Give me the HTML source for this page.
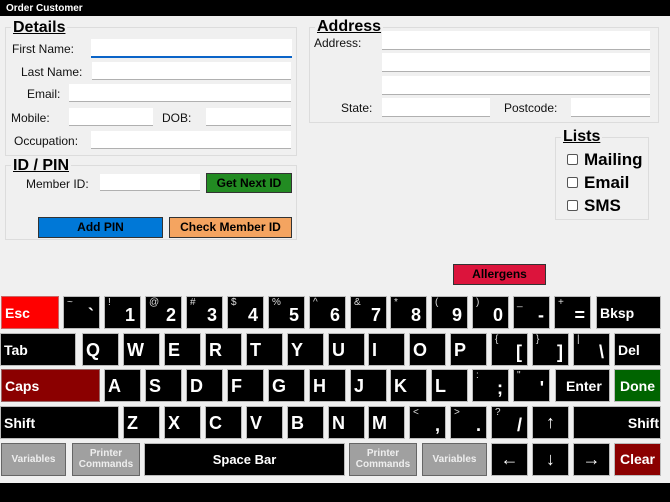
<!DOCTYPE html>
<html><head><meta charset="utf-8"><style>
*{margin:0;padding:0;box-sizing:border-box}
body{width:670px;height:502px;background:#000;position:relative;overflow:hidden;font-family:"Liberation Sans",Arial,sans-serif}
#main{position:absolute;left:0;top:16px;width:670px;height:467px;background:#f0f0f0}
.t{position:absolute;left:6px;top:3px;color:#fff;font-size:10px;font-weight:bold}
.g{position:absolute;border:1px solid #dcdcdc}
.lg{position:absolute;background:#f0f0f0;font-size:16px;font-weight:bold;text-decoration:underline;padding:0 2px;line-height:15px}
.l{position:absolute;font-size:12px;color:#111;line-height:14px}
.i{position:absolute;background:#fff;border-bottom:1px solid #b0b0b0}
.b{position:absolute;font-size:12px;font-weight:bold;text-align:center;border:1px solid #333}
.k{position:absolute;background:#000;border:1px solid #bbb;color:#fff;font-weight:bold;font-size:18px}
.k .c{position:absolute;left:3px;top:6px}
.k .s{position:absolute;left:3px;top:0;font-size:10px;font-weight:normal;color:#ddd}
.k .n{position:absolute;right:5px;bottom:2px;font-size:18px}
.k .w{position:absolute;left:3px;top:8px;font-size:14px}
.gr{background:#a0a0a0;color:#eee;font-size:10px;text-align:center;border:1px solid #666;line-height:11px}
.cb{position:absolute;width:11px;height:11px;border:1px solid #555;border-radius:2px;background:#fff}
.ck{position:absolute;font-size:17px;font-weight:bold}
</style></head><body>
<div class="t">Order Customer</div>
<div id="main">
<div class="g" style="left:5px;top:11px;width:292px;height:129px"></div>
<div class="lg" style="left:11px;top:4px">Details</div>
<div class="l" style="left:12px;top:26px">First Name:</div>
<div class="i" style="left:91px;top:23px;width:201px;height:19px;border-bottom:2px solid #0a64c8"></div>
<div class="l" style="left:21px;top:49px">Last Name:</div>
<div class="i" style="left:92px;top:46px;width:199px;height:18px"></div>
<div class="l" style="left:27px;top:71px">Email:</div>
<div class="i" style="left:69px;top:68px;width:222px;height:18px"></div>
<div class="l" style="left:11px;top:95px">Mobile:</div>
<div class="i" style="left:69px;top:92px;width:84px;height:18px"></div>
<div class="l" style="left:162px;top:95px">DOB:</div>
<div class="i" style="left:206px;top:92px;width:85px;height:18px"></div>
<div class="l" style="left:14px;top:118px">Occupation:</div>
<div class="i" style="left:91px;top:115px;width:200px;height:18px"></div>

<div class="g" style="left:5px;top:149px;width:292px;height:75px"></div>
<div class="lg" style="left:11px;top:142px">ID / PIN</div>
<div class="l" style="left:26px;top:161px">Member ID:</div>
<div class="i" style="left:100px;top:158px;width:100px;height:17px"></div>
<div class="b" style="left:206px;top:157px;width:86px;height:20px;background:#228b22;line-height:18px">Get Next ID</div>
<div class="b" style="left:38px;top:201px;width:125px;height:21px;background:#0078d7;line-height:19px">Add PIN</div>
<div class="b" style="left:169px;top:201px;width:123px;height:21px;background:#f4a460;line-height:19px">Check Member ID</div>

<div class="g" style="left:309px;top:11px;width:350px;height:96px"></div>
<div class="lg" style="left:315px;top:3px">Address</div>
<div class="l" style="left:314px;top:20px">Address:</div>
<div class="i" style="left:382px;top:15px;width:268px;height:19px"></div>
<div class="i" style="left:382px;top:37px;width:268px;height:19px"></div>
<div class="i" style="left:382px;top:60px;width:268px;height:19px"></div>
<div class="l" style="left:341px;top:85px">State:</div>
<div class="i" style="left:382px;top:82px;width:108px;height:19px"></div>
<div class="l" style="left:504px;top:85px">Postcode:</div>
<div class="i" style="left:571px;top:82px;width:79px;height:19px"></div>

<div class="g" style="left:555px;top:121px;width:94px;height:83px"></div>
<div class="lg" style="left:561px;top:113px">Lists</div>
<div class="cb" style="left:567px;top:138px"></div><div class="ck" style="left:584px;top:134px">Mailing</div>
<div class="cb" style="left:567px;top:161px"></div><div class="ck" style="left:584px;top:157px">Email</div>
<div class="cb" style="left:567px;top:184px"></div><div class="ck" style="left:584px;top:180px">SMS</div>

<div class="b" style="left:453px;top:248px;width:93px;height:21px;background:#dc143c;line-height:19px">Allergens</div>
</div>

<div class="k" style="left:1px;top:296px;width:58px;height:33px;background:#f00;border-color:#c66"><span class="w">Esc</span></div>
<div class="k" style="left:63px;top:296px;width:37px;height:33px"><span class="s">~</span><span class="n">`</span></div>
<div class="k" style="left:104px;top:296px;width:37px;height:33px"><span class="s">!</span><span class="n">1</span></div>
<div class="k" style="left:145px;top:296px;width:37px;height:33px"><span class="s">@</span><span class="n">2</span></div>
<div class="k" style="left:186px;top:296px;width:37px;height:33px"><span class="s">#</span><span class="n">3</span></div>
<div class="k" style="left:227px;top:296px;width:37px;height:33px"><span class="s">$</span><span class="n">4</span></div>
<div class="k" style="left:268px;top:296px;width:37px;height:33px"><span class="s">%</span><span class="n">5</span></div>
<div class="k" style="left:309px;top:296px;width:37px;height:33px"><span class="s">^</span><span class="n">6</span></div>
<div class="k" style="left:350px;top:296px;width:37px;height:33px"><span class="s">&amp;</span><span class="n">7</span></div>
<div class="k" style="left:390px;top:296px;width:37px;height:33px"><span class="s">*</span><span class="n">8</span></div>
<div class="k" style="left:431px;top:296px;width:37px;height:33px"><span class="s">(</span><span class="n">9</span></div>
<div class="k" style="left:472px;top:296px;width:37px;height:33px"><span class="s">)</span><span class="n">0</span></div>
<div class="k" style="left:513px;top:296px;width:37px;height:33px"><span class="s">_</span><span class="n">-</span></div>
<div class="k" style="left:554px;top:296px;width:37px;height:33px"><span class="s">+</span><span class="n">=</span></div>
<div class="k" style="left:596px;top:296px;width:65px;height:33px"><span class="w">Bksp</span></div>

<div class="k" style="left:0;top:333px;width:76px;height:33px"><span class="w">Tab</span></div>
<div class="k" style="left:82px;top:333px;width:37px;height:33px"><span class="c">Q</span></div>
<div class="k" style="left:123px;top:333px;width:37px;height:33px"><span class="c">W</span></div>
<div class="k" style="left:164px;top:333px;width:37px;height:33px"><span class="c">E</span></div>
<div class="k" style="left:205px;top:333px;width:37px;height:33px"><span class="c">R</span></div>
<div class="k" style="left:246px;top:333px;width:37px;height:33px"><span class="c">T</span></div>
<div class="k" style="left:287px;top:333px;width:37px;height:33px"><span class="c">Y</span></div>
<div class="k" style="left:328px;top:333px;width:37px;height:33px"><span class="c">U</span></div>
<div class="k" style="left:368px;top:333px;width:37px;height:33px"><span class="c">I</span></div>
<div class="k" style="left:409px;top:333px;width:37px;height:33px"><span class="c">O</span></div>
<div class="k" style="left:450px;top:333px;width:37px;height:33px"><span class="c">P</span></div>
<div class="k" style="left:491px;top:333px;width:37px;height:33px"><span class="s">{</span><span class="n">[</span></div>
<div class="k" style="left:532px;top:333px;width:37px;height:33px"><span class="s">}</span><span class="n">]</span></div>
<div class="k" style="left:573px;top:333px;width:37px;height:33px"><span class="s">|</span><span class="n">\</span></div>
<div class="k" style="left:614px;top:333px;width:47px;height:33px"><span class="w">Del</span></div>

<div class="k" style="left:1px;top:369px;width:99px;height:33px;background:#8b0000;border-color:#966"><span class="w">Caps</span></div>
<div class="k" style="left:104px;top:369px;width:37px;height:33px"><span class="c">A</span></div>
<div class="k" style="left:145px;top:369px;width:37px;height:33px"><span class="c">S</span></div>
<div class="k" style="left:186px;top:369px;width:37px;height:33px"><span class="c">D</span></div>
<div class="k" style="left:227px;top:369px;width:37px;height:33px"><span class="c">F</span></div>
<div class="k" style="left:268px;top:369px;width:37px;height:33px"><span class="c">G</span></div>
<div class="k" style="left:309px;top:369px;width:37px;height:33px"><span class="c">H</span></div>
<div class="k" style="left:350px;top:369px;width:37px;height:33px"><span class="c">J</span></div>
<div class="k" style="left:390px;top:369px;width:37px;height:33px"><span class="c">K</span></div>
<div class="k" style="left:431px;top:369px;width:37px;height:33px"><span class="c">L</span></div>
<div class="k" style="left:472px;top:369px;width:37px;height:33px"><span class="s">:</span><span class="n">;</span></div>
<div class="k" style="left:513px;top:369px;width:37px;height:33px"><span class="s">"</span><span class="n">'</span></div>
<div class="k" style="left:555px;top:369px;width:55px;height:33px"><span class="w" style="left:10px">Enter</span></div>
<div class="k" style="left:614px;top:369px;width:47px;height:33px;background:#006400"><span class="w" style="left:5px">Done</span></div>

<div class="k" style="left:0;top:406px;width:119px;height:33px"><span class="w">Shift</span></div>
<div class="k" style="left:123px;top:406px;width:37px;height:33px"><span class="c">Z</span></div>
<div class="k" style="left:164px;top:406px;width:37px;height:33px"><span class="c">X</span></div>
<div class="k" style="left:205px;top:406px;width:37px;height:33px"><span class="c">C</span></div>
<div class="k" style="left:246px;top:406px;width:37px;height:33px"><span class="c">V</span></div>
<div class="k" style="left:287px;top:406px;width:37px;height:33px"><span class="c">B</span></div>
<div class="k" style="left:328px;top:406px;width:37px;height:33px"><span class="c">N</span></div>
<div class="k" style="left:368px;top:406px;width:37px;height:33px"><span class="c">M</span></div>
<div class="k" style="left:409px;top:406px;width:37px;height:33px"><span class="s">&lt;</span><span class="n">,</span></div>
<div class="k" style="left:450px;top:406px;width:37px;height:33px"><span class="s">&gt;</span><span class="n">.</span></div>
<div class="k" style="left:491px;top:406px;width:37px;height:33px"><span class="s">?</span><span class="n">/</span></div>
<div class="k" style="left:532px;top:406px;width:37px;height:33px;text-align:center;font-weight:normal;line-height:31px">↑</div>
<div class="k" style="left:573px;top:406px;width:88px;height:33px"><span class="w" style="left:auto;right:1px">Shift</span></div>

<div class="k gr" style="left:1px;top:443px;width:65px;height:33px;line-height:31px">Variables</div>
<div class="k gr" style="left:72px;top:443px;width:68px;height:33px;padding-top:4px">Printer<br>Commands</div>
<div class="k" style="left:144px;top:443px;width:201px;height:33px;text-align:center;font-size:13px;line-height:31px">Space Bar</div>
<div class="k gr" style="left:349px;top:443px;width:68px;height:33px;padding-top:4px">Printer<br>Commands</div>
<div class="k gr" style="left:422px;top:443px;width:65px;height:33px;line-height:31px">Variables</div>
<div class="k" style="left:491px;top:443px;width:37px;height:33px;text-align:center;font-weight:normal;line-height:31px">←</div>
<div class="k" style="left:532px;top:443px;width:37px;height:33px;text-align:center;font-weight:normal;line-height:31px">↓</div>
<div class="k" style="left:573px;top:443px;width:37px;height:33px;text-align:center;font-weight:normal;line-height:31px">→</div>
<div class="k" style="left:614px;top:443px;width:47px;height:33px;background:#8b0000;font-size:14px;line-height:31px;text-align:center">Clear</div>
</body></html>
